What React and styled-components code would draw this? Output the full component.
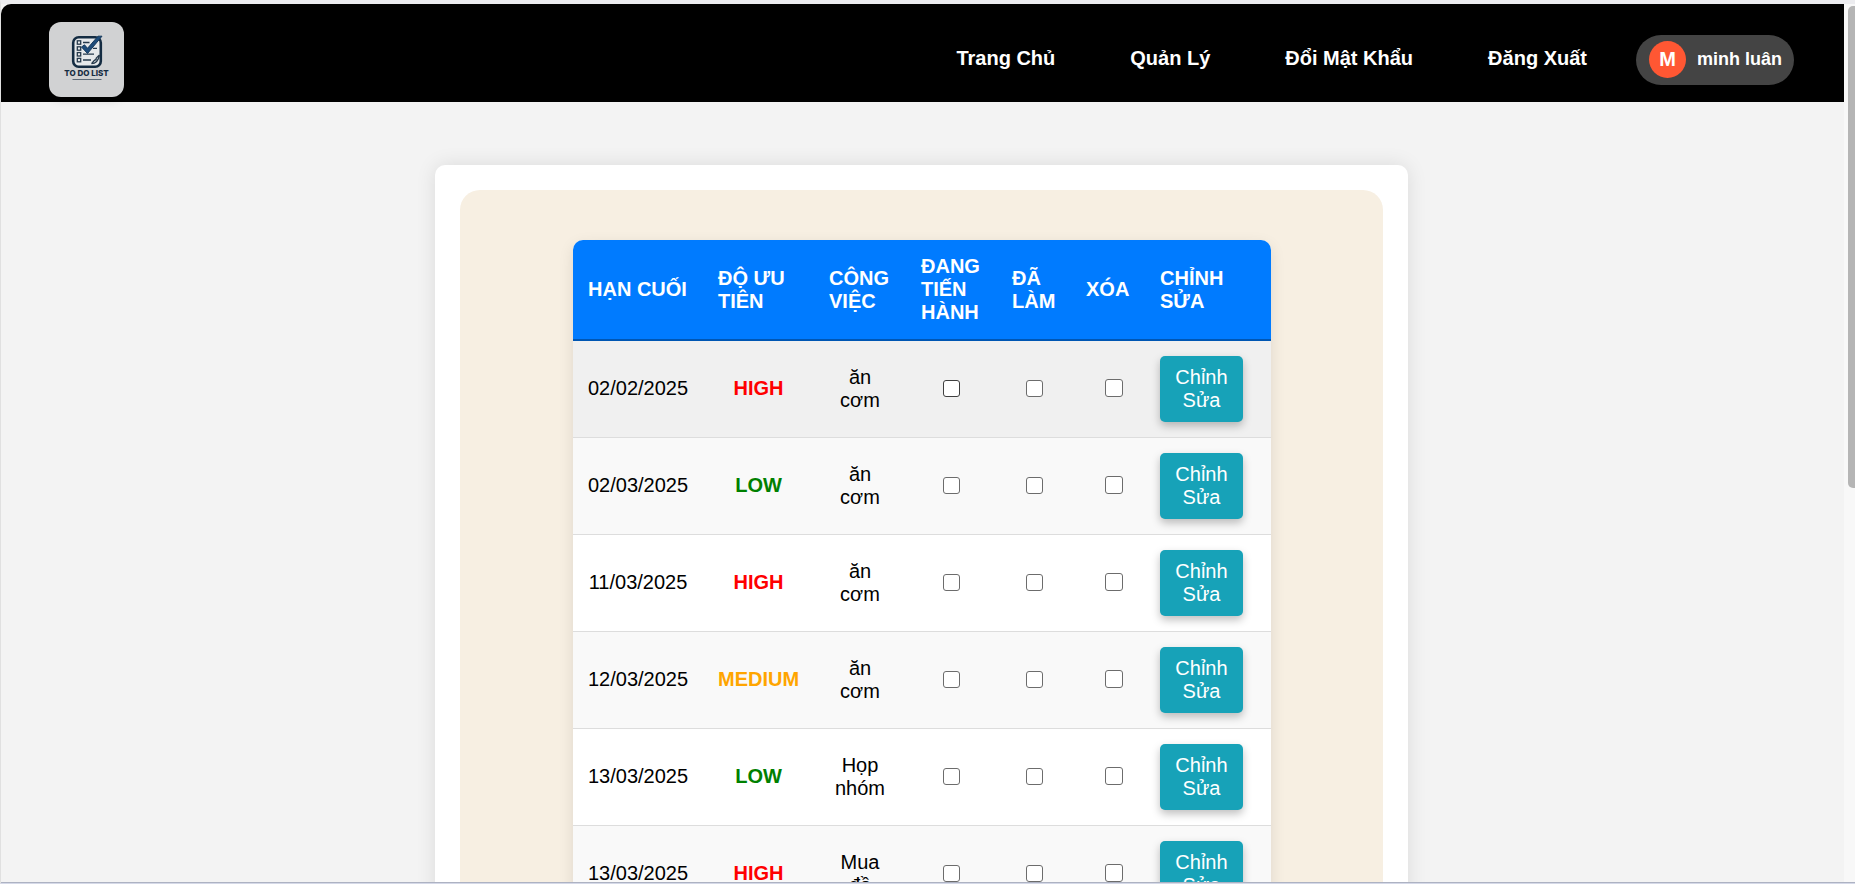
import React from "react";
import styled, { createGlobalStyle } from "styled-components";

const GlobalStyle = createGlobalStyle`
  * { box-sizing: border-box; }
  body {
    margin: 0;
    background: #f3f3f3;
    font-family: "Liberation Sans", Arial, Helvetica, sans-serif;
    font-size: 20px;
    line-height: 23px;
    color: #000;
  }
`;

const Window = styled.div`
  display: flex;
  height: 100vh;
  overflow: hidden;
  background: #f3f3f3;
  border-top: 4px solid #ececef;
  border-left: 1px solid #e0e0e0;
  border-bottom: 1px solid #d5d9e8;
`;

const Viewport = styled.div`
  flex: 1;
  min-width: 0;
  overflow: hidden;
  border-bottom: 1px solid #adb2c2;
`;

const ScrollTrack = styled.div`
  flex: none;
  width: 11px;
  padding: 2px 0 0 4px;
  overflow: hidden;
  background: #f8f8f8;
  border-bottom: 1px solid #adb2c2;
`;

const ScrollThumb = styled.div`
  height: 55%;
  background: #b5b5b5;
  border-radius: 5px 0 0 5px;
`;

const Header = styled.header`
  display: flex;
  align-items: center;
  justify-content: space-between;
  padding: 18px 50px 5px 48px;
  background: #000;
  border-top-left-radius: 10px;
`;

const LogoLink = styled.a`
  display: block;
  width: 75px;
  height: 75px;
  border-radius: 12px;
  overflow: hidden;
  box-shadow: 0 4px 8px rgba(0, 0, 0, 0.1);
`;

const LogoArt = styled.svg`
  display: block;
`;

const Nav = styled.nav`
  display: flex;
  align-items: center;
  gap: 49px;
`;

const Links = styled.div`
  display: flex;
  gap: 75px;
  padding-bottom: 3px;
`;

const NavLink = styled.a`
  color: #fff;
  font-weight: bold;
  text-decoration: none;
  white-space: nowrap;
`;

const Profile = styled.button`
  display: flex;
  align-items: center;
  gap: 11px;
  height: 50px;
  padding: 0 12px 1px 13px;
  border: 0;
  border-radius: 25px;
  background: #444;
  color: #fff;
  font: bold 18px/20px "Liberation Sans", Arial, sans-serif;
  white-space: nowrap;
`;

const Avatar = styled.span`
  display: grid;
  place-items: center;
  width: 37px;
  height: 37px;
  border-radius: 50%;
  background: #ff5733;
  font-size: 20px;
`;

const Main = styled.main`
  display: flex;
  justify-content: center;
  padding: 63px 12px 60px 10px;
`;

const Card = styled.section`
  width: 100%;
  max-width: 973px;
  padding: 25px;
  background: #fff;
  border-radius: 10px;
  box-shadow: 0 0 20px rgba(0, 0, 0, 0.1);
`;

const Panel = styled.div`
  display: flex;
  justify-content: center;
  padding: 50px 20px 50px 21px;
  background: #f7efe2;
  border-radius: 20px;
`;

const TaskTable = styled.table`
  width: 698px;
  table-layout: fixed;
  border-spacing: 0;
  border-radius: 10px;
  overflow: hidden;
  background: #fff;
  box-shadow: 0 5px 15px rgba(0, 0, 0, 0.1);
`;

const Col = styled.col`
  width: ${(p) => p.$width}px;
`;

const HeadCell = styled.th`
  padding: 15px;
  background: #007bff;
  border-bottom: 2px solid #0056b3;
  color: #fff;
  font-weight: bold;
  text-align: left;
  text-transform: uppercase;
`;

const Row = styled.tr`
  background: ${(p) => (p.$active ? "#f0f0f0" : "#fff")};
  &:nth-child(even) { background: #f9f9f9; }
`;

const Cell = styled.td`
  padding: 15px 15px 16px;
  border-bottom: 1px solid #ddd;
  text-align: center;
`;

const ActionCell = styled(Cell)`
  padding: 15px;
  text-align: left;
`;

const priorityColors = { HIGH: "#ff0000", LOW: "#008000", MEDIUM: "#ffa500" };

const Priority = styled.span`
  color: ${(p) => priorityColors[p.$level]};
  font-weight: bold;
`;

const Check = styled.input`
  appearance: none;
  display: block;
  width: 17px;
  height: 17px;
  margin: 0 auto;
  border: 1px solid ${(p) => (p.$active ? "#3f3f3f" : "#6c6c6c")};
  border-radius: 3px;
  background: #fff;
`;

const DeleteCheck = styled(Check)`
  width: 18px;
  height: 18px;
  margin: 0 0 2px 19px;
`;

const EditButton = styled.button`
  width: 83px;
  padding: 10px 15px;
  display: block;
  border: 0;
  border-radius: 5px;
  background: #17a2b8;
  color: #fff;
  font: inherit;
  box-shadow: 0 4px 8px rgba(0, 0, 0, 0.25);
`;

const links = ["Trang Chủ", "Quản Lý", "Đổi Mật Khẩu", "Đăng Xuất"];
const columns = [
  ["Hạn cuối", 130],
  ["Độ ưu tiên", 111],
  ["Công việc", 92],
  ["Đang tiến hành", 91],
  ["Đã làm", 74],
  ["Xóa", 74],
  ["Chỉnh sửa", 126],
];
const tasks = [
  ["02/02/2025", "HIGH", "ăn cơm"],
  ["02/03/2025", "LOW", "ăn cơm"],
  ["11/03/2025", "HIGH", "ăn cơm"],
  ["12/03/2025", "MEDIUM", "ăn cơm"],
  ["13/03/2025", "LOW", "Họp nhóm"],
  ["13/03/2025", "HIGH", "Mua đồ"],
];

function Logo() {
  return (
    <LogoArt width="75" height="75" viewBox="0 0 75 75">
      <rect width="75" height="75" fill="#d1d2d3" />
      <rect x="24.2" y="15.2" width="27.6" height="29.6" rx="5.5" fill="#e6e9eb" stroke="#142c42" strokeWidth="2.6" />
      <g fill="none" stroke="#25394b" strokeWidth="1.3">
        <rect x="28.3" y="18.8" width="3.4" height="3.4" />
        <rect x="28.3" y="24.8" width="3.4" height="3.4" />
        <rect x="28.3" y="30.6" width="3.4" height="3.4" />
        <rect x="28.3" y="36.4" width="3.4" height="3.4" />
        <path d="M34 20.500h6.500M34 26.400h2M44 26.400h4M34 32.200h11M34 38h8" />
        <path d="M50.500 33c-1.500 1.500-4 2.500-3.500 4.500-2 .5-3 2.500-4.500 4.200M42.500 41.700c4 0 7-3.500 8-8.500" />
      </g>
      <path d="M32.500 25l3-2.200 3 3.500L49 14.200h4L38.500 31.500z" fill="#1d4c7b" stroke="#173a5d" strokeWidth="1" />
      <text x="37.500" y="54" textAnchor="middle" fontFamily="Inter, sans-serif" fontWeight="800" fontSize="8" fill="#152c42">TO DO LIST</text>
      <path d="M23.500 57.500h29" stroke="#5c6a77" strokeWidth="1" />
    </LogoArt>
  );
}

export default function App() {
  return (
    <Window>
      <GlobalStyle />
      <Viewport>
        <Header>
          <LogoLink href="#" aria-label="To Do List"><Logo /></LogoLink>
          <Nav>
            <Links>
              {links.map((l) => <NavLink key={l} href="#">{l}</NavLink>)}
            </Links>
            <Profile type="button"><Avatar>M</Avatar>minh luân</Profile>
          </Nav>
        </Header>
        <Main>
          <Card>
            <Panel>
              <TaskTable>
                <colgroup>
                  {columns.map(([name, width]) => <Col key={name} $width={width} />)}
                </colgroup>
                <thead>
                  <tr>{columns.map(([name]) => <HeadCell key={name} scope="col">{name}</HeadCell>)}</tr>
                </thead>
                <tbody>
                  {tasks.map(([date, level, name], i) => (
                    <Row key={i} $active={i === 0}>
                      <Cell>{date}</Cell>
                      <Cell><Priority $level={level}>{level}</Priority></Cell>
                      <Cell>{name}</Cell>
                      <Cell><Check type="checkbox" aria-label={`Đang tiến hành: ${name}`} $active={i === 0} /></Cell>
                      <Cell><Check type="checkbox" aria-label={`Đã làm: ${name}`} /></Cell>
                      <Cell><DeleteCheck type="checkbox" aria-label={`Xóa: ${name}`} /></Cell>
                      <ActionCell><EditButton type="button">Chỉnh Sửa</EditButton></ActionCell>
                    </Row>
                  ))}
                </tbody>
              </TaskTable>
            </Panel>
          </Card>
        </Main>
      </Viewport>
      <ScrollTrack><ScrollThumb /></ScrollTrack>
    </Window>
  );
}
